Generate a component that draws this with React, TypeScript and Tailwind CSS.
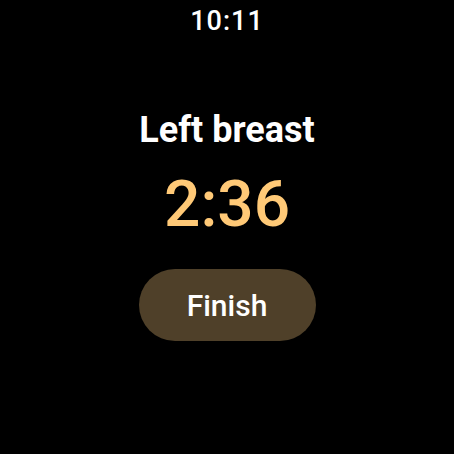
export default function App() {
  return (
    <div
      className="w-[454px] h-[454px] bg-black text-white flex flex-col items-center overflow-hidden"
      style={{ fontFamily: 'Roboto, "Noto Sans", sans-serif' }}
    >
      <div className="mt-[5px] text-[27px] font-medium leading-[32px] tracking-[1px]">10:11</div>
      <div className="mt-[72px] text-[36px] font-bold leading-[42px]">Left breast</div>
      <div className="mt-[18px] text-[64px] font-medium leading-[72px] text-[#ffc977]">2:36</div>
      <button className="mt-[28px] w-[177px] h-[72px] rounded-full bg-[#4f4029] text-white text-[30px] font-medium">
        Finish
      </button>
    </div>
  )
}
